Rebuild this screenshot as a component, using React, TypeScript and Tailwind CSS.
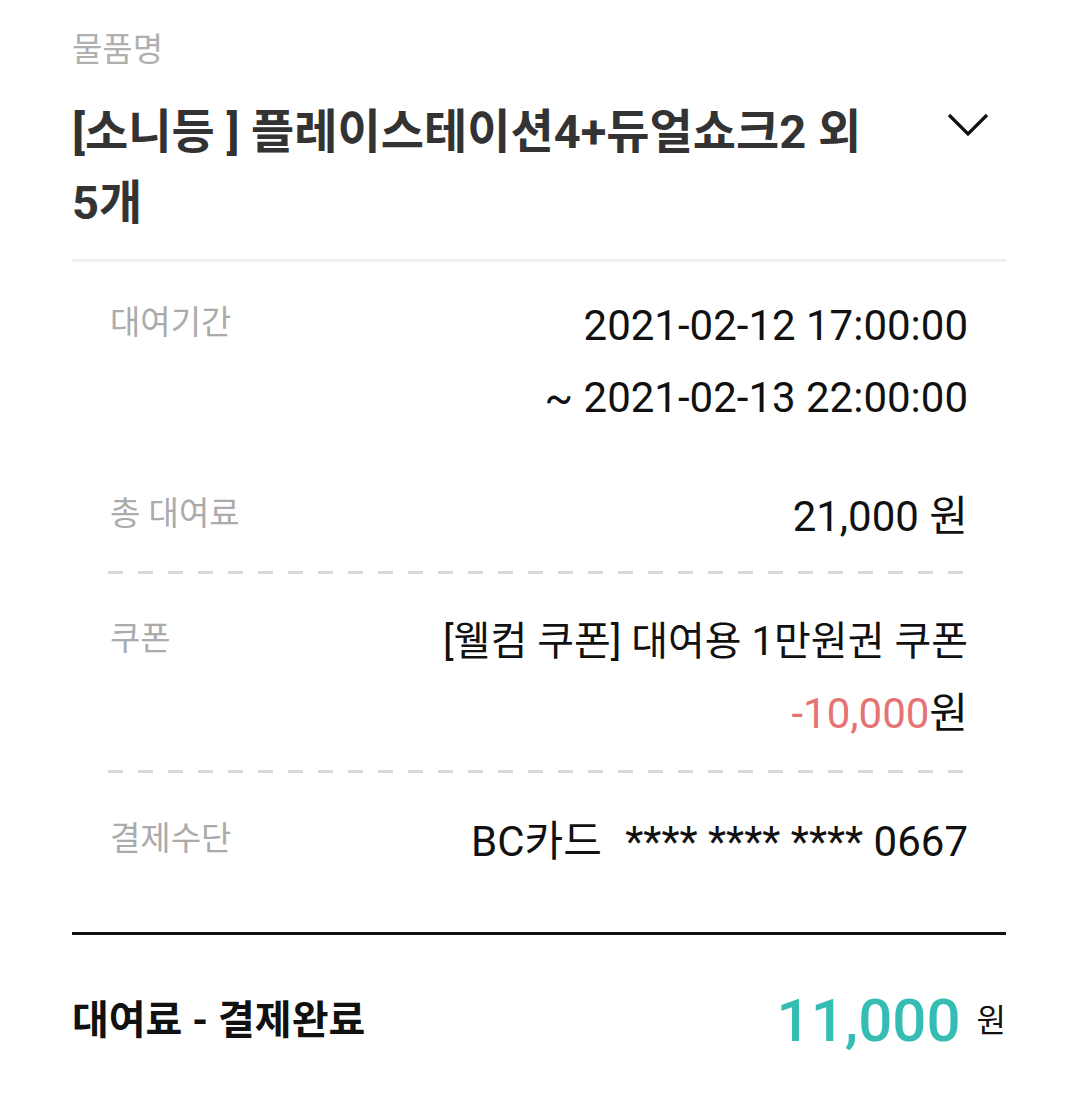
import React from "react";

const FONT = "font-['Roboto','Noto_Sans_CJK_KR',sans-serif]";

const DASHED =
  "h-[3px] mx-[-2px] bg-[repeating-linear-gradient(to_right,#d9d9d9_0px,#d9d9d9_15px,transparent_15px,transparent_30px)]";

function Row({
  label,
  children,
  className = "",
}: {
  label: string;
  children: React.ReactNode;
  className?: string;
}) {
  return (
    <div className={`flex items-start justify-between ${className}`}>
      <div className="text-[33px] leading-[66px] text-[#ababab]">{label}</div>
      <div className="text-right text-[42px] leading-[72px] text-[#111]">{children}</div>
    </div>
  );
}

export default function App() {
  return (
    <div className={`min-h-screen bg-white px-[72px] pt-[26px] ${FONT}`}>
      {/* Item name */}
      <div className="text-[33px] leading-[48px] text-[#b0b0b0]">물품명</div>
      <div className="mt-[22px] flex items-start justify-between">
        <div className="w-[830px] text-[47px] font-bold leading-[71px] text-[#333]">
          [소니등 ] 플레이스테이션4+듀얼쇼크2 외 <span className="whitespace-nowrap">5개</span>
        </div>
        <svg
          className="mr-[17px] mt-[16px] h-[26px] w-[42px]"
          viewBox="0 0 42 26"
          fill="none"
          stroke="#111"
          strokeWidth="3.2"
        >
          <path d="M2 3 L21 22 L40 3" />
        </svg>
      </div>
      <div className="mt-[21px] h-[3px] bg-[#efefef]" />

      {/* Details */}
      <div className="px-[38px] pt-[28px]">
        <Row label="대여기간">
          <div>2021-02-12 17:00:00</div>
          <div>~ 2021-02-13 22:00:00</div>
        </Row>
        <Row label="총 대여료" className="mt-[47px] pb-[18px]">
          <div>21,000 원</div>
        </Row>
        <div className={DASHED} />
        <Row label="쿠폰" className="mt-[32px] pb-[20px]">
          <div className="text-[40px]">[웰컴 쿠폰] 대여용 1만원권 쿠폰</div>
          <div>
            <span className="text-[#e57373]">-10,000</span>원
          </div>
        </Row>
        <div className={DASHED} />
        <Row label="결제수단" className="mt-[33px] pb-[54px]">
          <div>
            BC카드 <span className="ml-[13px]">**** **** **** 0667</span>
          </div>
        </Row>
      </div>
      <div className="h-[3px] bg-[#111]" />

      {/* Total */}
      <div className="flex items-center justify-between pt-[50px]">
        <div className="text-[40px] font-bold text-[#111]">대여료 - 결제완료</div>
        <div className="flex items-center">
          <span className="text-[60px] font-medium leading-[72px] text-[#35bdb4]">11,000</span>
          <span className="ml-[16px] text-[32px] text-[#111]">원</span>
        </div>
      </div>
    </div>
  );
}
